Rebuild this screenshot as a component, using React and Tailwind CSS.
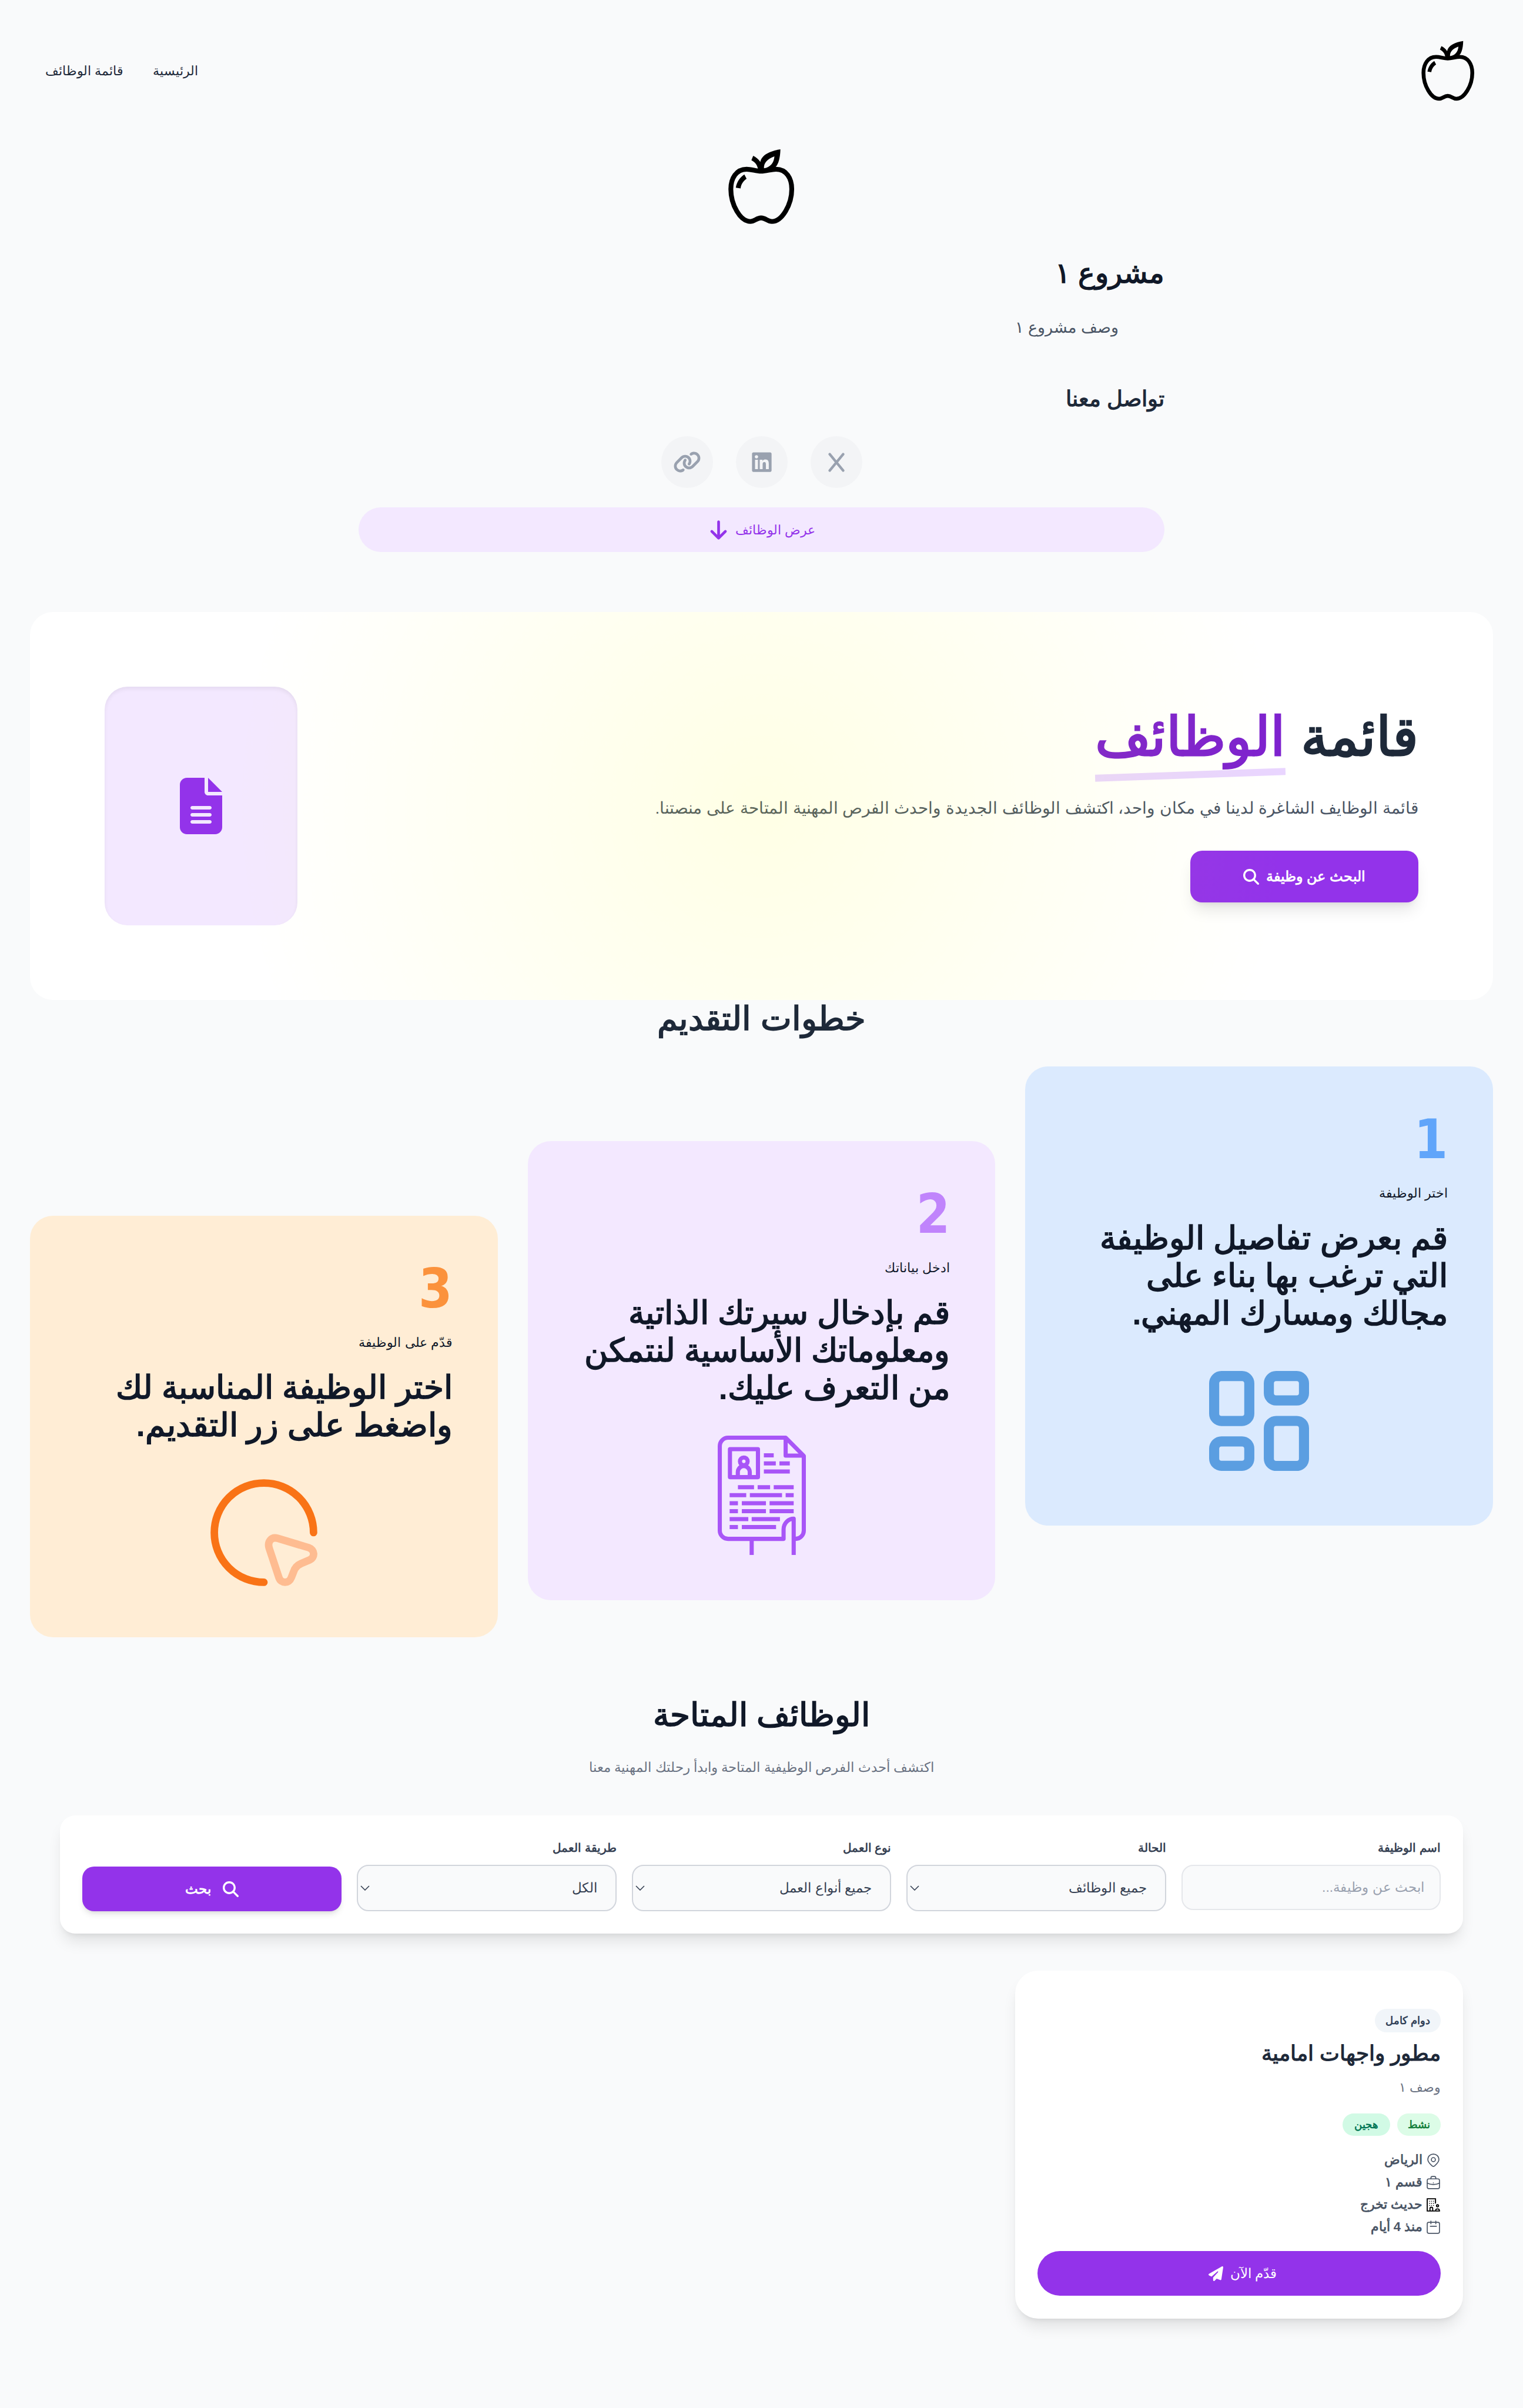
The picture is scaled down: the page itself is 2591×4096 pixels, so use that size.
import React from "react";
import { FaLink, FaLinkedin, FaArrowDown, FaFileLines, FaMagnifyingGlass, FaPaperPlane } from "react-icons/fa6";

function AppleLogo({ className }) {
  return (
    <svg viewBox="0 0 100 100" className={className} role="img" aria-label="apple">
      <path
        d="M49.5 31.4C43 31.4 38.5 29 32 29C19.5 29 13 40 13 53C13 72 24.5 92 36.5 92C41.8 92 44 87.7 49.5 87.7C55 87.7 57.2 92 62.5 92C74.5 92 86.5 72 86.5 53C86.5 40 80 29 67.5 29C61 29 56 31.4 49.5 31.4Z"
        fill="none"
        stroke="#000"
        strokeWidth="5.8"
      />
      <path d="M29.3 35.2L32 40.4C27.6 43.5 25.3 47.5 24.8 52.1L19 51.2C20 44.5 24 38.5 29.3 35.2Z" />
      <path
        fillRule="evenodd"
        d="M40 12.8L37.8 18C42.5 20.5 45.5 24.5 45.9 30H62C70 27 72.5 17 72.8 5C60 7 50 12 48.6 20.3C46.5 17 43.5 14.5 40 12.8ZM65.6 13.4C57 16.5 52.5 21.5 53 27.9C60.5 26.5 65 21.5 65.6 13.4Z"
      />
    </svg>
  );
}

function CrossIcon({ className }) {
  return (
    <svg viewBox="0 0 28 33" className={className} fill="none" stroke="currentColor" strokeWidth="4.4" strokeLinecap="round">
      <path d="M2.6 2.6L25.4 30.4M25.4 2.6L2.6 30.4" />
    </svg>
  );
}

function GridArt() {
  return (
    <svg viewBox="0 0 192 192" className="size-[170px]" fill="none" stroke="#5b9ee1" strokeWidth="19.4">
      <rect x="9.7" y="9.7" width="67.5" height="86.5" rx="14" />
      <rect x="9.7" y="135.3" width="67.5" height="47" rx="14" />
      <rect x="114.8" y="9.7" width="67.5" height="47" rx="14" />
      <rect x="114.8" y="96" width="67.5" height="86.5" rx="14" />
    </svg>
  );
}

function ResumeArt() {
  return (
    <svg viewBox="0 0 170 230" className="h-[203px] w-[150px]" fill="none" stroke="#a855f7" strokeWidth="8">
      <g strokeLinejoin="round">
        <path d="M146.5 230V160C137 160 127 168 127 181V199H20a16 16 0 0 1-16-16V20A16 16 0 0 1 20 4H131L166 39V183a16 16 0 0 1-16 16H147" />
        <path d="M131 4V38.5H166" />
        <rect x="23.6" y="26" width="54" height="54" />
      </g>
      <path d="M65.5 199V230" />
      <circle cx="50.3" cy="49.5" r="7.4" />
      <path d="M38.8 80V70.5a11.5 12 0 0 1 23 0V80" />
      <path d="M89 38H108M89 53.5H112M119 53.5H139M89 69H139" />
      <path d="M39 99.5H70M77 99.5H101M108 99.5H146.5M23 114.8H55M62 114.8H124M131 114.8H146.5" />
      <path d="M23 130.2H39M46.5 130.2H93M100 130.2H146.5M23 145.6H39M46.5 145.6H93M100 145.6H146.5" />
      <path d="M23 161H59M65.5 161H120M23 176.3H39M46.5 176.3H112.5" />
    </svg>
  );
}

function ClickArt() {
  return (
    <svg viewBox="0 0 207 207" className="size-[182px]" fill="none" strokeWidth="14.5" strokeLinecap="round" strokeLinejoin="round">
      <path stroke="#f97316" d="M199.5 103.5A96 96 0 1 0 103.5 199.5" />
      <path
        stroke="#febc91"
        d="M130 114.5L190 132.5C202 136.5 203 151.5 192 156.3L176 163C168 166.5 163.5 171 161 179L156.5 190.5C152 202.5 136.5 202.5 132.5 190.5L113.5 133C110 121 118 111 130 114.5Z"
      />
    </svg>
  );
}

const iconProps = { viewBox: "0 0 24 24", fill: "none", stroke: "currentColor", strokeWidth: 1.6, strokeLinecap: "round", className: "size-[25px] shrink-0" };

function PinIcon() {
  return (
    <svg {...iconProps}>
      <path d="M3 11C3 5.6 7 2 12 2s9 3.6 9 9c0 4-3.4 7-6.6 10-1.6 1.5-3.2 1.5-4.8 0C6.4 18 3 15 3 11z" />
      <circle cx="12" cy="11" r="3.3" />
    </svg>
  );
}

function BriefcaseIcon() {
  return (
    <svg {...iconProps}>
      <rect x="2" y="6" width="20" height="16" rx="2.5" />
      <path d="M8 6V4.5A2.5 2.5 0 0 1 10.5 2h3A2.5 2.5 0 0 1 16 4.5V6M2 13c6 3 14 3 20 0M12 12.6v.1" />
    </svg>
  );
}

function BuildingIcon() {
  return (
    <svg {...iconProps} stroke="#000" strokeWidth="1.8">
      <path d="M15.500 9V2H2V22H14M6.500 22V18a2.200 2.200 0 0 1 4.400 0V22" />
      <path d="M5.8 6h.1M9 6h.1M12.200 6h.1M5.800 9.500h.1M9 9.500h.1M12.200 9.500h.1M5.800 13h.1M9 13h.1M12.200 13h.1" strokeWidth="1.5" />
      <circle cx="18.800" cy="13.500" r="1.700" />
      <path d="M15.500 22c0-4.500 6.500-4.500 6.500 0z" />
    </svg>
  );
}

function CalendarIcon() {
  return (
    <svg {...iconProps}>
      <rect x="2" y="4" width="20" height="18" rx="2.5" />
      <path d="M8 2v4.5M16 2v4.500M7 10.500h10" />
    </svg>
  );
}

const steps = [
  { n: "1", label: "اختر الوظيفة", lines: ["قم بعرض تفاصيل الوظيفة", "التي ترغب بها بناء على", "مجالك ومسارك المهني."], card: "bg-[#dbeafe]", num: "text-[#60a5fa]", Art: GridArt },
  { n: "2", label: "ادخل بياناتك", lines: ["قم بإدخال سيرتك الذاتية", "ومعلوماتك الأساسية لنتمكن", "من التعرف عليك."], card: "bg-[#f3e8ff] mt-[127px]", num: "text-[#c084fc]", Art: ResumeArt },
  { n: "3", label: "قدّم على الوظيفة", lines: ["اختر الوظيفة المناسبة لك", "واضغط على زر التقديم."], card: "bg-[#ffedd5] mt-[254px]", num: "text-[#fb923c]", Art: ClickArt },
];

function StepCard({ n, label, lines, card, num, Art }) {
  return (
    <li className={"rounded-[39px] p-[77px] " + card}>
      <div className={"font-['DejaVu_Sans_Condensed','DejaVu_Sans',sans-serif] text-[92px] leading-[95px] font-bold " + num}>{n}</div>
      <p className="mt-[28px] text-[22px] leading-[32px] text-gray-900">{label}</p>
      <h3 className="mt-[28px] text-[55px] leading-[64px] font-bold text-gray-900">
        {lines.map((line) => (
          <span key={line} className="block whitespace-nowrap">{line}</span>
        ))}
      </h3>
      <div className="mt-[49px] flex h-[203px] items-center justify-center">
        <Art />
      </div>
    </li>
  );
}

function FilterSelect({ id, label, options }) {
  return (
    <div>
      <label htmlFor={id} className="mb-3 block text-[20px] leading-[34px] font-semibold text-gray-700">{label}</label>
      <div className="relative">
        <select id={id} className="h-[79px] w-full appearance-none rounded-[20px] border-2 border-gray-300 bg-gray-50 pr-[31px] pl-10 text-[23px] text-gray-700">
          {options.map((o) => (
            <option key={o}>{o}</option>
          ))}
        </select>
        <svg viewBox="0 0 16 9" className="pointer-events-none absolute top-[35px] left-[6px] h-[9px] w-4 text-gray-700" fill="none" stroke="currentColor" strokeWidth="1.6">
          <path d="M1 1L8 8L15 1" />
        </svg>
      </div>
    </div>
  );
}

const facts = [
  { text: "الرياض", Icon: PinIcon },
  { text: "قسم ١", Icon: BriefcaseIcon },
  { text: "حديث تخرج", Icon: BuildingIcon },
  { text: "منذ 4 أيام", Icon: CalendarIcon },
];

export default function App() {
  return (
    <div dir="rtl" lang="ar" className="min-h-screen bg-gray-50 pb-16 font-['Liberation_Sans',sans-serif]">
      <header className="flex items-center justify-between px-[71px] pt-16 pb-[70px]">
        <a href="#home">
          <AppleLogo className="size-[113px]" />
        </a>
        <nav className="flex gap-[50px] px-1.5 text-[22px] leading-[32px] text-gray-800">
          <a href="#home">الرئيسية</a>
          <a href="#jobs">قائمة الوظائف</a>
        </nav>
      </header>

      <section className="mx-auto w-full max-w-[1371px]">
        <AppleLogo className="mx-auto size-[141px]" />
        <h1 className="mt-[49px] text-[48px] leading-[56px] font-bold text-gray-900">مشروع ١</h1>
        <p className="mt-11 px-[78px] text-[27px] leading-[40px] text-gray-600">وصف مشروع ١</p>
        <h2 className="mt-[78px] text-[37px] leading-[48px] font-semibold text-gray-800">تواصل معنا</h2>
        <div className="mt-[39px] flex justify-center gap-[39px] text-gray-400">
          <a href="#x" aria-label="X" className="flex size-[88px] items-center justify-center rounded-full bg-gray-100">
            <CrossIcon className="h-[33px] w-7" />
          </a>
          <a href="#linkedin" aria-label="LinkedIn" className="flex size-[88px] items-center justify-center rounded-full bg-gray-100">
            <FaLinkedin className="size-[38px]" />
          </a>
          <a href="#website" aria-label="Website" className="flex size-[88px] items-center justify-center rounded-full bg-gray-100">
            <FaLink className="h-[38px] w-12" />
          </a>
        </div>
        <a href="#jobs" className="mt-[33px] flex h-[76px] items-center justify-center gap-[10px] rounded-full bg-purple-100 text-[22px] text-[#9333ea]">
          عرض الوظائف
          <FaArrowDown className="size-[37px]" />
        </a>
      </section>

      <section className="relative mx-[51px] mt-[102px] flex items-center justify-between overflow-hidden rounded-[39px] bg-white p-[127px]">
        <div>
          <h2 className="text-[92px] leading-[93px] font-bold text-gray-800">
            قائمة{" "}
            <span className="relative inline-block text-[#7e22ce]">
              الوظائف
              <span className="absolute inset-x-0 bottom-[-24px] h-3 -rotate-2 bg-[#e9d5ff]" />
            </span>
          </h2>
          <p className="mt-[55px] text-[28px] leading-[40px] text-gray-600">
            قائمة الوظايف الشاغرة لدينا في مكان واحد، اكتشف الوظائف الجديدة واحدث الفرص المهنية المتاحة على منصتنا.
          </p>
          <button className="mt-[52px] flex h-[88px] w-[388px] items-center justify-center gap-3 rounded-[20px] bg-[#9333ea] text-[24px] font-bold text-white shadow-[0_18px_26px_-5px_rgba(0,0,0,0.1),0_7px_11px_-7px_rgba(0,0,0,0.1)]">
            البحث عن وظيفة
            <FaMagnifyingGlass className="size-[27px]" />
          </button>
        </div>
        <div className="flex h-[406px] w-[328px] shrink-0 items-center justify-center rounded-[39px] bg-[#f3e8ff] shadow-[inset_0_4px_7px_rgba(0,0,0,0.06)]">
          <FaFileLines className="size-24 text-[#9333ea]" />
        </div>
        <div className="pointer-events-none absolute inset-0 bg-[radial-gradient(circle,rgba(255,255,0,0.1)_0%,rgba(255,255,0,0)_70%)]" />
      </section>

      <section className="mx-[51px]">
        <h2 className="text-center text-[56px] leading-[64px] font-bold text-gray-800">خطوات التقديم</h2>
        <ol className="mt-[49px] grid grid-cols-3 items-start gap-[51px]">
          {steps.map((s) => (
            <StepCard key={s.n} {...s} />
          ))}
        </ol>
      </section>

      <section id="jobs" className="mx-[102px] mt-[100px]">
        <h2 className="text-center text-[55px] leading-[64px] font-bold text-gray-900">الوظائف المتاحة</h2>
        <p className="mt-[37px] text-center text-[23px] leading-[40px] text-gray-500">اكتشف أحدث الفرص الوظيفية المتاحة وابدأ رحلتك المهنية معنا</p>

        <form className="mt-[62px] grid grid-cols-5 items-start gap-[26px] rounded-[26px] bg-white p-[38px] shadow-[0_18px_26px_-5px_rgba(0,0,0,0.1),0_7px_11px_-7px_rgba(0,0,0,0.1)]">
          <div>
            <label htmlFor="job-name" className="mb-3 block text-[20px] leading-[34px] font-semibold text-gray-700">اسم الوظيفة</label>
            <input
              id="job-name"
              type="text"
              placeholder="ابحث عن وظيفة..."
              className="block h-[77px] w-full rounded-[20px] border-2 border-gray-200 bg-gray-50 px-[26px] text-[23px] placeholder:text-gray-400"
            />
          </div>
          <FilterSelect id="status" label="الحالة" options={["جميع الوظائف"]} />
          <FilterSelect id="type" label="نوع العمل" options={["جميع أنواع العمل"]} />
          <FilterSelect id="mode" label="طريقة العمل" options={["الكل"]} />
          <button
            type="button"
            className="flex h-[76px] items-center justify-center gap-5 self-end rounded-[20px] bg-[#9333ea] text-[23px] font-bold text-white shadow-[0_7px_11px_-2px_rgba(0,0,0,0.1),0_4px_7px_-4px_rgba(0,0,0,0.1)]"
          >
            <FaMagnifyingGlass className="size-[27px]" />
            بحث
          </button>
        </form>

        <div className="mt-[63px] grid grid-cols-3 gap-[51px]">
          <article className="rounded-[39px] bg-white px-[38px] pt-[65px] pb-[39px] shadow-[0_18px_26px_-5px_rgba(0,0,0,0.1),0_7px_11px_-7px_rgba(0,0,0,0.1)]">
            <span className="flex h-10 w-fit items-center rounded-full bg-slate-100 px-[18px] text-[18px] font-semibold text-slate-700">دوام كامل</span>
            <h3 className="mt-3 text-[36px] leading-[48px] font-bold text-gray-800">مطور واجهات امامية</h3>
            <p className="mt-[18px] text-[22px] leading-[32px] text-gray-500">وصف ١</p>
            <div className="mt-[28px] flex gap-3 text-[18px] font-semibold">
              <span className="flex h-[38px] items-center rounded-full bg-[#dcfce7] px-[18px] text-[#15803d]">نشط</span>
              <span className="flex h-[38px] items-center rounded-full bg-[#d1fae5] px-[20px] text-[#047857]">هجين</span>
            </div>
            <ul className="mt-[22px] text-[22px] leading-[38px] font-semibold text-gray-600">
              {facts.map(({ text, Icon }) => (
                <li key={text} className="flex items-center gap-1.5">
                  <Icon />
                  {text}
                </li>
              ))}
            </ul>
            <button className="mt-[22px] flex h-[76px] w-full items-center justify-center gap-3 rounded-full bg-[#9333ea] text-[23px] text-white">
              قدّم الآن
              <FaPaperPlane className="ml-3 size-[25px]" />
            </button>
          </article>
        </div>
      </section>
    </div>
  );
}
